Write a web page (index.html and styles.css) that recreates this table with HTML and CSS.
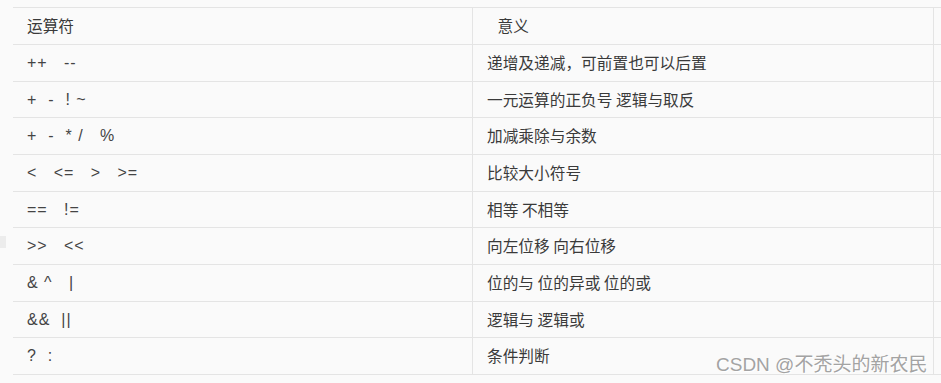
FILE: index.html
```html
<!DOCTYPE html>
<html lang="zh">
<head>
<meta charset="utf-8">
<title>运算符</title>
<link rel="stylesheet" href="styles.css">
</head>
<body>
<div class="page">
  <span class="edge-mark"></span>
  <div class="table">
    <div class="cell c1 head">运算符</div><div class="cell c2 head">   意义</div><div class="cell c3"></div>
    <div class="cell c1 op">++   --</div><div class="cell c2">递增及递减，可前置也可以后置</div><div class="cell c3"></div>
    <div class="cell c1 op">+  -  ! ~</div><div class="cell c2">一元运算的正负号 逻辑与取反</div><div class="cell c3"></div>
    <div class="cell c1 op">+  -  * /   %</div><div class="cell c2">加减乘除与余数</div><div class="cell c3"></div>
    <div class="cell c1 op">&lt;   &lt;=   &gt;   &gt;=</div><div class="cell c2">比较大小符号</div><div class="cell c3"></div>
    <div class="cell c1 op">==   !=</div><div class="cell c2">相等 不相等</div><div class="cell c3"></div>
    <div class="cell c1 op">&gt;&gt;   &lt;&lt;</div><div class="cell c2">向左位移 向右位移</div><div class="cell c3"></div>
    <div class="cell c1 op">&amp; ^   |</div><div class="cell c2">位的与 位的异或 位的或</div><div class="cell c3"></div>
    <div class="cell c1 op">&amp;&amp;  ||</div><div class="cell c2">逻辑与 逻辑或</div><div class="cell c3"></div>
    <div class="cell c1 op">?  :</div><div class="cell c2">条件判断</div><div class="cell c3"></div>
  </div>
  <div class="watermark">CSDN @不秃头的新农民</div>
</div>
</body>
</html>
```
FILE: styles.css
```css
html, body {
  margin: 0;
  padding: 0;
  background: #fafafa;
  overflow: hidden;
}
.page {
  position: relative;
  width: 941px;
  height: 383px;
  padding: 7px 0 0 13px;
  box-sizing: border-box;
  overflow: hidden;
  font-family: "Noto Sans CJK SC", "Noto Sans", sans-serif;
  font-size: 15.7px;
  color: #3a3a3a;
}
.table {
  display: grid;
  grid-template-columns: 459px 461px 40px;
  grid-template-rows: 37px 37px 36px 37px 37px 36px 37px 37px 36px 37px;
  border-bottom: 1px solid #e4e4e4;
  width: 960px;
}
.cell {
  border-top: 1px solid #e4e4e4;
  display: flex;
  align-items: center;
  padding: 0 14px;
  white-space: pre;
  box-sizing: border-box;
  line-height: 1;
}
.c2, .c3 {
  border-left: 1px solid #e4e4e4;
}
.op {
  font-family: "Liberation Sans", sans-serif;
  font-size: 16px;
  letter-spacing: 1px;
  color: #444;
}
.edge-mark {
  position: absolute;
  left: 0;
  top: 236px;
  width: 6px;
  height: 12px;
  background: #ececec;
}
.watermark {
  position: absolute;
  left: 716px;
  top: 353px;
  font-family: "Liberation Sans", "Noto Sans CJK SC", sans-serif;
  font-size: 19px;
  line-height: 24px;
  color: #a3a3a3;
  text-shadow: 0 0 1px #fff, 1px 1px 0 #fff;
  white-space: nowrap;
}
```
